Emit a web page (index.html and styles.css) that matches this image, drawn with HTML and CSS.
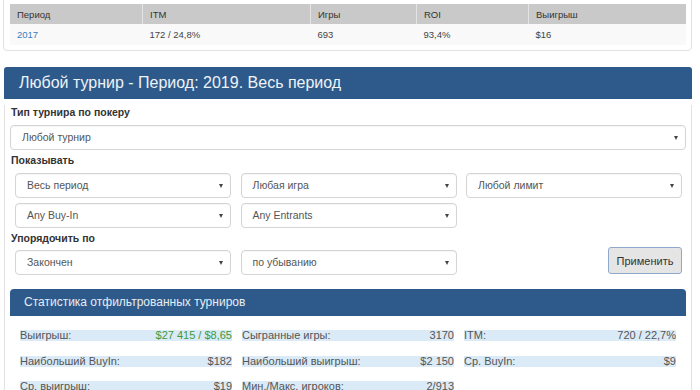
FILE: index.html
```html
<!DOCTYPE html>
<html>
<head>
<meta charset="utf-8">
<link rel="stylesheet" href="styles.css">
</head>
<body>
<div class="top-panel">
  <table class="ptable">
    <thead>
      <tr><th class="c1">Период</th><th class="c2">ITM</th><th class="c3">Игры</th><th class="c4">ROI</th><th class="c5">Выигрыш</th></tr>
    </thead>
    <tbody>
      <tr><td><a class="link">2017</a></td><td>172 / 24,8%</td><td>693</td><td>93,4%</td><td>$16</td></tr>
    </tbody>
  </table>
</div>

<div class="panel">
  <div class="panel-head">Любой турнир - Период: 2019. Весь период</div>
  <div class="panel-body">
    <div class="label first">Тип турнира по покеру</div>
    <div class="select wide">Любой турнир<span class="arrow"></span></div>
    <div class="label">Показывать</div>
    <div class="grid3">
      <div class="select">Весь период<span class="arrow"></span></div>
      <div class="select">Любая игра<span class="arrow"></span></div>
      <div class="select">Любой лимит<span class="arrow"></span></div>
      <div class="select">Any Buy-In<span class="arrow"></span></div>
      <div class="select">Any Entrants<span class="arrow"></span></div>
    </div>
    <div class="label">Упорядочить по</div>
    <div class="grid3 order">
      <div class="select">Закончен<span class="arrow"></span></div>
      <div class="select">по убыванию<span class="arrow"></span></div>
      <div class="btn-cell"><button class="btn">Применить</button></div>
    </div>

    <div class="stats">
      <div class="stats-head">Статистика отфильтрованных турниров</div>
      <div class="stats-body">
        <div class="stat"><span>Выигрыш:</span><span class="green">$27 415 / $8,65</span></div>
        <div class="stat"><span>Сыгранные игры:</span><span>3170</span></div>
        <div class="stat"><span>ITM:</span><span>720 / 22,7%</span></div>
        <div class="stat"><span>Наибольший BuyIn:</span><span>$182</span></div>
        <div class="stat"><span>Наибольший выигрыш:</span><span>$2 150</span></div>
        <div class="stat"><span>Ср. BuyIn:</span><span>$9</span></div>
        <div class="stat"><span>Ср. выигрыш:</span><span>$19</span></div>
        <div class="stat"><span>Мин./Макс. игроков:</span><span>2/913</span></div>
      </div>
    </div>
  </div>
</div>
</body>
</html>
```

FILE: styles.css
```css
html, body {
  margin: 0;
  padding: 0;
  background: #fff;
  font-family: "Liberation Sans", Arial, sans-serif;
  color: #333;
  overflow: hidden;
}

.top-panel {
  margin: -20px 0 0 3px;
  width: 675px;
  padding: 23px 6px 5px 6px;
  border: 1px solid #e2e2e2;
  border-radius: 4px;
}

.ptable {
  width: 676px;
  border-collapse: collapse;
  font-size: 9.5px;
}
.ptable th {
  background: #c9c9c9;
  font-weight: normal;
  color: #333;
  text-align: left;
  height: 20px;
  padding: 0 0 0 7px;
  border-left: 1px solid #e4e4e4;
}
.ptable th:first-child { border-left: none; }
.ptable td {
  background: #f9f9f9;
  height: 21px;
  padding: 0 0 0 7px;
  color: #444;
}
.c1 { width: 125px; }
.c2 { width: 160px; }
.c3 { width: 98px; }
.c4 { width: 104px; }
.link { color: #3a7bbf; }

.panel {
  margin: 16px 0 0 4px;
  width: 688px;
}
.panel-head {
  background: #2d5a8a;
  color: #eef3f8;
  font-size: 16px;
  height: 32px;
  line-height: 32px;
  padding-left: 15px;
  border-radius: 3px 3px 0 0;
}
.panel-body {
  border-left: 1px solid #e2e2e2;
  border-right: 1px solid #e2e2e2;
  padding: 0 5px 20px 5px;
}

.label {
  font-weight: bold;
  font-size: 10.5px;
  line-height: 14px;
  color: #333;
  padding-left: 1px;
  margin-top: 3px;
}
.label.first { margin-top: 6px; }

.select {
  position: relative;
  height: 23px;
  line-height: 23px;
  border: 1px solid #d4d4d4;
  border-radius: 4px;
  background: #fff;
  box-shadow: inset 0 1px 1px rgba(0,0,0,0.04);
  font-size: 10.5px;
  color: #555;
  padding-left: 11px;
}
.select.wide {
  margin-top: 6px;
}
.arrow {
  position: absolute;
  right: 7px;
  top: 10px;
  width: 0;
  height: 0;
  border-left: 2.5px solid transparent;
  border-right: 2.5px solid transparent;
  border-top: 4px solid #444;
}

.grid3 {
  display: grid;
  grid-template-columns: 216px 216px 216px;
  column-gap: 9.5px;
  row-gap: 5px;
  padding: 0 4px 0 5px;
  margin-top: 6px;
}
.order { margin-top: 5px; }

.btn-cell {
  display: flex;
  justify-content: flex-end;
  align-items: flex-start;
  margin-top: -3px;
}
.btn {
  width: 74px;
  height: 27px;
  background: #e5e5e5;
  border: 1px solid #8fa9cc;
  border-radius: 3px;
  font-family: "Liberation Sans", Arial, sans-serif;
  font-size: 11px;
  color: #333;
  padding: 0;
}

.stats {
  margin-top: 14px;
}
.stats-head {
  background: #2d5a8a;
  color: #e6edf4;
  font-size: 12px;
  height: 27px;
  line-height: 27px;
  padding-left: 14px;
  border-radius: 4px 4px 0 0;
}
.stats-body {
  display: grid;
  grid-template-columns: 212px 212px 212px;
  column-gap: 10px;
  row-gap: 14.5px;
  padding: 14px 10px 0 10px;
}
.stat {
  display: flex;
  justify-content: space-between;
  background: #daeaf6;
  height: 11px;
  line-height: 11px;
  font-size: 11px;
  color: #555;
}
.stat span { white-space: nowrap; }
.green { color: #3d9a3d; }
```
